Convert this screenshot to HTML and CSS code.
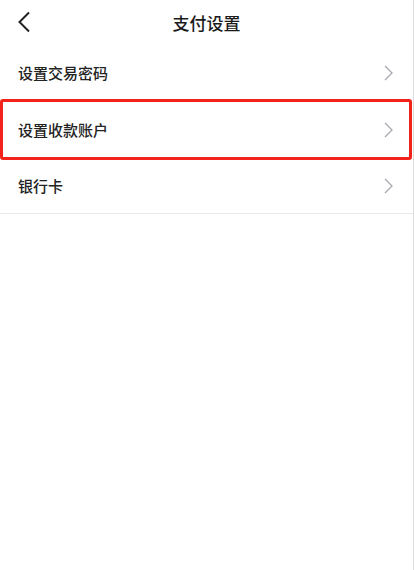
FILE: index.html
```html
<!DOCTYPE html>
<html lang="zh">
<head>
<meta charset="utf-8">
<link rel="stylesheet" href="styles.css">
</head>
<body>
<div class="page">
  <header class="nav">
    <svg class="back" width="14" height="22" viewBox="0 0 14 22"><path d="M12 1.5 L2.5 11 L12 20.5" fill="none" stroke="#222" stroke-width="2"/></svg>
    <div class="title">支付设置</div>
  </header>
  <ul class="list">
    <li class="row"><span>设置交易密码</span><svg class="chev" width="9" height="16" viewBox="0 0 9 16"><path d="M1 1 L8 8 L1 15" fill="none" stroke="#a8a8b0" stroke-width="1.3"/></svg></li>
    <li class="row"><span>设置收款账户</span><svg class="chev" width="9" height="16" viewBox="0 0 9 16"><path d="M1 1 L8 8 L1 15" fill="none" stroke="#a8a8b0" stroke-width="1.3"/></svg></li>
    <li class="row last"><span>银行卡</span><svg class="chev" width="9" height="16" viewBox="0 0 9 16"><path d="M1 1 L8 8 L1 15" fill="none" stroke="#a8a8b0" stroke-width="1.3"/></svg></li>
  </ul>
  <div class="highlight"></div>
</div>
</body>
</html>
```

FILE: styles.css
```css
html, body {
  margin: 0;
  padding: 0;
  background: #fff;
}
body {
  font-family: "Noto Sans CJK SC", "Noto Sans", sans-serif;
  color: #222;
}
.page {
  position: relative;
  width: 413px;
  height: 570px;
  border-right: 1px solid #dcdcdc;
}
.nav {
  position: relative;
  height: 44px;
  display: flex;
  align-items: center;
  justify-content: center;
}
.back {
  position: absolute;
  left: 17px;
  top: 11px;
}
.title {
  font-size: 17px;
  font-weight: 500;
  color: #1a1a1a;
}
.list {
  list-style: none;
  margin: 0;
  padding: 0;
}
.row {
  height: 57px;
  display: flex;
  align-items: center;
  justify-content: space-between;
  padding: 0 20px 0 18px;
  font-size: 15px;
  font-weight: 500;
  color: #222;
}
.row.last {
  height: 55px;
  border-bottom: 1px solid #e8e8e8;
}
.chev {
  display: block;
}
.highlight {
  position: absolute;
  left: 0;
  top: 99px;
  width: 406px;
  height: 55px;
  border: 3px solid #f2231b;
  border-radius: 3px;
}
```
